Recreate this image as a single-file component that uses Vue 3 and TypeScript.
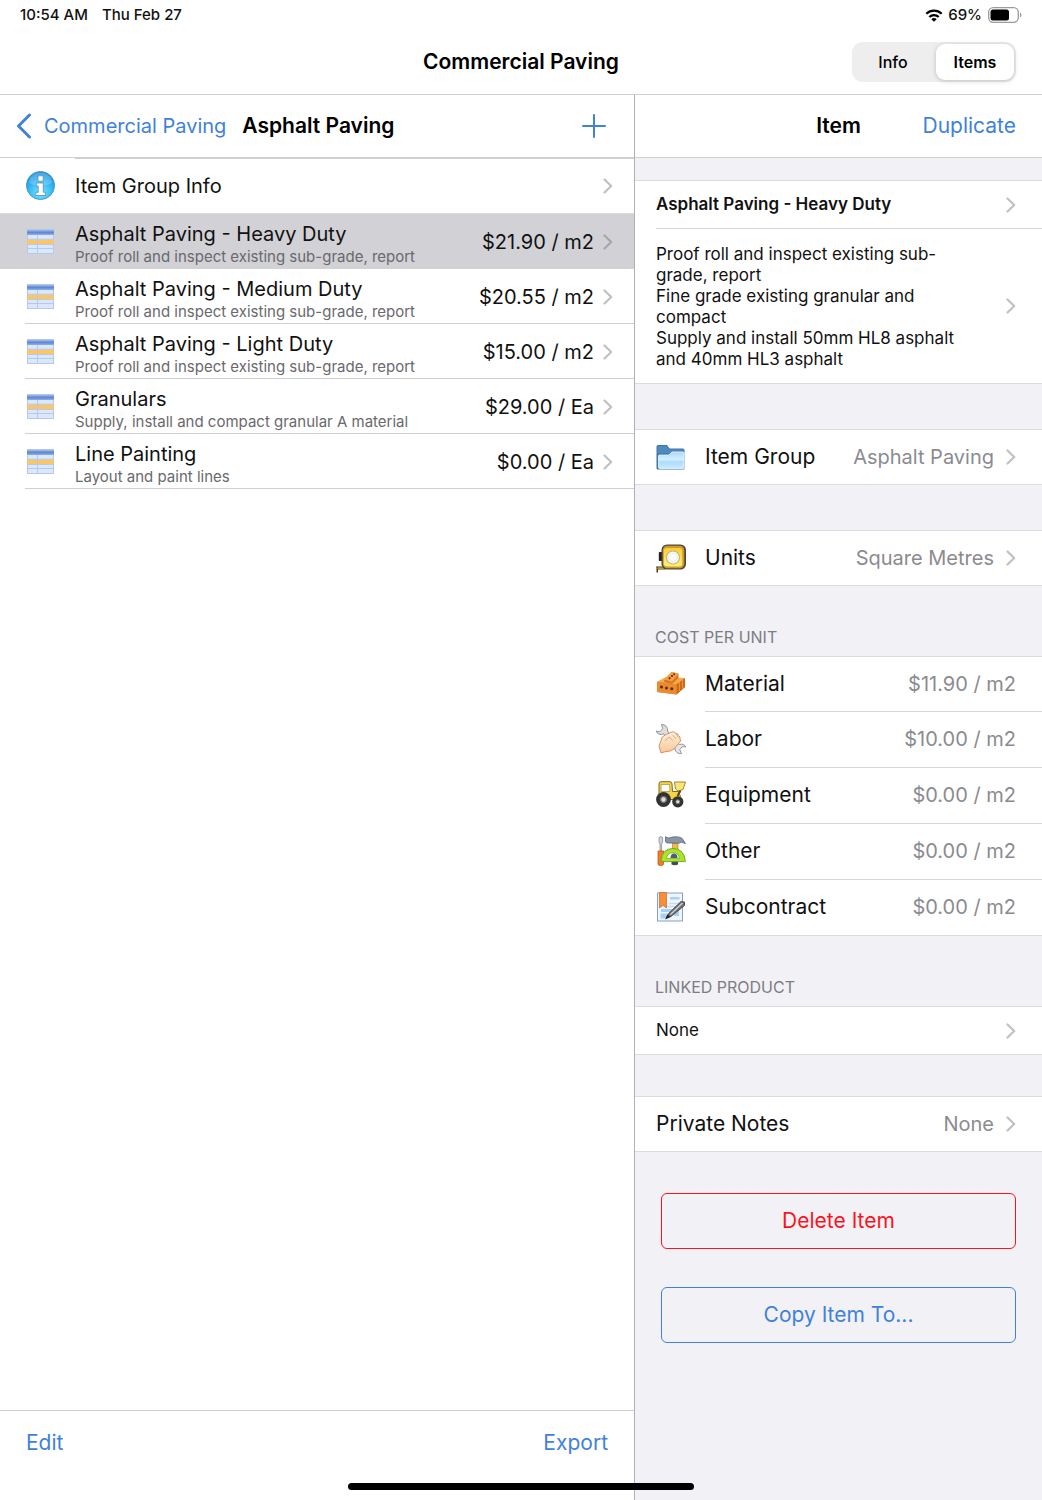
<script setup lang="ts">
import { ref } from 'vue'

interface EstimateItem {
  name: string
  note: string
  price: string
}

interface CostLine {
  icon: string
  label: string
  value: string
}

const tab = ref<'info' | 'items'>('items')
const selected = ref(0)

const items: EstimateItem[] = [
  { name: 'Asphalt Paving - Heavy Duty', note: 'Proof roll and inspect existing sub-grade, report', price: '$21.90 / m2' },
  { name: 'Asphalt Paving - Medium Duty', note: 'Proof roll and inspect existing sub-grade, report', price: '$20.55 / m2' },
  { name: 'Asphalt Paving - Light Duty', note: 'Proof roll and inspect existing sub-grade, report', price: '$15.00 / m2' },
  { name: 'Granulars', note: 'Supply, install and compact granular A material', price: '$29.00 / Ea' },
  { name: 'Line Painting', note: 'Layout and paint lines', price: '$0.00 / Ea' },
]

const description: string[] = [
  'Proof roll and inspect existing sub-grade, report',
  'Fine grade existing granular and compact',
  'Supply and install 50mm HL8 asphalt and 40mm HL3 asphalt',
]

const costs: CostLine[] = [
  { icon: 'brick', label: 'Material', value: '$11.90 / m2' },
  { icon: 'hand', label: 'Labor', value: '$10.00 / m2' },
  { icon: 'loader', label: 'Equipment', value: '$0.00 / m2' },
  { icon: 'tools', label: 'Other', value: '$0.00 / m2' },
  { icon: 'contract', label: 'Subcontract', value: '$0.00 / m2' },
]
</script>

<template>
  <div class="screen">
    <svg class="defs" width="0" height="0" aria-hidden="true">
      <defs>
        <radialGradient id="g-info" cx="0.5" cy="0.75" r="0.7">
          <stop offset="0" stop-color="#7fe6ff" />
          <stop offset="0.6" stop-color="#35b8f3" />
          <stop offset="1" stop-color="#1d8fdc" />
        </radialGradient>
        <linearGradient id="g-head" x1="0" y1="0" x2="0" y2="1">
          <stop offset="0" stop-color="#c3d3f2" />
          <stop offset="0.55" stop-color="#5c86d3" />
          <stop offset="1" stop-color="#8fafe8" />
        </linearGradient>
        <linearGradient id="g-folder" x1="0" y1="0" x2="0" y2="1">
          <stop offset="0" stop-color="#a9d8fa" />
          <stop offset="0.45" stop-color="#d3efff" />
          <stop offset="0.6" stop-color="#aedcfb" />
          <stop offset="1" stop-color="#cdeaff" />
        </linearGradient>
        <linearGradient id="g-tape" x1="0" y1="0" x2="0" y2="1">
          <stop offset="0" stop-color="#f3cf3a" />
          <stop offset="1" stop-color="#fff37a" />
        </linearGradient>
        <linearGradient id="g-hand" x1="0" y1="0" x2="0" y2="1">
          <stop offset="0" stop-color="#fff0da" />
          <stop offset="1" stop-color="#f8c799" />
        </linearGradient>
        <symbol id="i-chevron" viewBox="0 0 10 16">
          <path d="M1.5 1.5 8.2 8 1.5 14.500" fill="none" stroke="currentColor" stroke-width="2.200" stroke-linecap="round" stroke-linejoin="round" />
        </symbol>
        <symbol id="i-info" viewBox="0 0 30 30">
          <circle cx="14.500" cy="14.500" r="14" fill="url(#g-info)" stroke="#3a9bcb" />
          <path d="M3 12a11.500 10.500 0 0 1 23 0q-11.500 6-23 0z" fill="#fff" opacity="0.2" />
          <path d="M12 4.800h5.200v5.400h-5.200zM10.300 12h7v9.300h2.200v3.200h-9.700v-3.200h2.400v-6.300h-1.900z" fill="#fff" stroke="#4a8fb4" stroke-width="0.800" />
        </symbol>
        <symbol id="i-table" viewBox="0 0 30 30">
          <rect x="1.500" y="2.500" width="26" height="24" fill="#dbe8fc" stroke="#b4c8ec" />
          <rect x="1" y="2" width="27" height="6" fill="url(#g-head)" />
          <rect x="1" y="12.500" width="27" height="4.500" fill="#fcc667" />
          <path d="M1 21.500h27M1 12.200h27M1 17.500h27M11.500 8v19" stroke="#b1c6ec" stroke-width="0.900" fill="none" />
        </symbol>
        <symbol id="i-folder" viewBox="0 0 30 30">
          <path d="M0.500 4.500q0-1.500 1.500-1.500h9l2.500 3.500h13.500q1.500 0 1.500 1.500v18q0 1.500-1.500 1.500h-25q-1.500 0-1.500-1.500z" fill="#3f76a8" />
          <path d="M1.500 5q0-1 1-1h8l2.500 3.500h14.500v4h-26z" fill="#5089bd" />
          <path d="M2.500 14q0-1 1-1h9.500l3-3h11q1 0 1 1v14.500q0 1-1 1h-23.500q-1 0-1-1z" fill="url(#g-folder)" stroke="#eef9ff" stroke-width="0.800" />
        </symbol>
        <symbol id="i-tape" viewBox="0 0 30 30">
          <rect x="2.800" y="9" width="4" height="9" rx="1" fill="#222" />
          <path d="M0 23.500h9v3h-7v3H.500v-4.500z" fill="#4c3a10" />
          <path d="M1.500 24.500h9v1.200h-9z" fill="#f6c431" />
          <rect x="5.500" y="1.500" width="24.500" height="25" rx="5.500" fill="#4a4845" />
          <rect x="6.800" y="2.800" width="21.500" height="22.500" rx="4.500" fill="#d9961f" />
          <rect x="7.800" y="5" width="18.500" height="18.500" rx="3" fill="url(#g-tape)" />
          <circle cx="17" cy="14.500" r="6.500" fill="#fff" stroke="#c5b673" stroke-width="1.200" />
          <circle cx="17" cy="14.500" r="4.400" fill="#fbfbfd" stroke="#dcdade" stroke-width="0.700" />
        </symbol>
        <symbol id="i-brick" viewBox="0 0 30 30">
          <path d="M1 13 10 8.500 29 9.500v8.500l-8.500 7.500L1 23z" fill="#e07c20" />
          <path d="M1 13 10 8l19 1-8.500 6.500z" fill="#f6a94e" />
          <path d="M20.500 15.500 29 9v9l-8.500 7.500z" fill="#cf6a14" />
          <path d="M1 13l19.500 2.500v10L1 23z" fill="#eb8b31" />
          <path d="M8 11.500 15.500 3l7 1.500v4.500l-6.500 6-8-2z" fill="#da751b" />
          <path d="M8 10.500 15.500 3l7 1.500-6.500 8z" fill="#f39f43" />
          <path d="M23.500 13v9M26.500 10.500v9" stroke="#f0a04b" stroke-width="0.800" />
          <g fill="#63290a">
            <circle cx="5.500" cy="18" r="1.500" /><circle cx="10.500" cy="19" r="1.500" /><circle cx="15.800" cy="19.800" r="1.500" />
            <circle cx="13.500" cy="9.300" r="1.100" /><circle cx="16" cy="7" r="1.100" /><circle cx="18.200" cy="5.200" r="1" />
          </g>
        </symbol>
        <symbol id="i-hand" viewBox="0 0 30 30">
          <path d="M5.500.5a5.500 5.500 0 0 1 6 6.500l2.500 3.500-3 2.500-3.500-3a5.500 5.500 0 0 1-7.500-3l3.700.8 3-3z" fill="#dedee1" stroke="#8b8b90" stroke-width="0.900" />
          <path d="M25.500 29.500a5.200 5.200 0 0 1-6.500-5l-1.500-3 3-2.500 3 1.500a5.200 5.200 0 0 1 6.300 2.500l-3.500-.3-2.600 2.800z" fill="#e6e6e8" stroke="#8b8b90" stroke-width="0.900" />
          <path d="M5 16.500q0-4 5-6l6-2.500q2.500-.8 3.500 1.200 2.800 0 3 2.600 2.300.7 1.500 3.200 1.500 2-.5 3.500L18 25q-4 3-8 2.500L5 29 3 22z" fill="url(#g-hand)" stroke="#c98c5c" stroke-width="0.900" />
          <path d="M13.500 13l3 3.500M16.500 11l3.500 4M19.500 9.500l3 4M9 17q2-3 4.500-4" stroke="#d19c6f" stroke-width="0.800" fill="none" />
        </symbol>
        <symbol id="i-loader" viewBox="0 0 30 30">
          <path d="M3 4q0-2.300 2-2.300h9q2 0 2 2.300l.5 7.500h6l2 5-4 3H3z" fill="#f5d548" stroke="#80691f" />
          <path d="M5.200 4.500h8.300l.5 7H5z" fill="#fff" stroke="#a68c2f" stroke-width="0.700" />
          <path d="M18.500 2h11L27 9.500l-5 1.500-2.500-2z" fill="#f9e678" stroke="#9a7a20" stroke-width="0.900" />
          <path d="M21.500 16l3-5.500" stroke="#5b4b1c" stroke-width="2" />
          <circle cx="7.500" cy="19.500" r="7.400" fill="#333335" />
          <circle cx="7.500" cy="19.500" r="2.800" fill="#e2e0d4" stroke="#77777a" stroke-width="1.200" />
          <circle cx="21.800" cy="21.800" r="5.600" fill="#333335" />
          <circle cx="21.800" cy="21.800" r="2" fill="#e2e0d4" stroke="#77777a" />
        </symbol>
        <symbol id="i-tools" viewBox="0 0 30 30">
          <path d="M3 1.500 4.800.5l1.800 1v4.500L5.600 8v7H4V8L3 6z" fill="#ccd3dc" stroke="#76808c" stroke-width="0.700" />
          <path d="M2 15h5.500v13q0 1.500-2.700 1.500T2 28z" fill="#f47b28" stroke="#c25818" stroke-width="0.800" />
          <path d="M16.500 7h5.500v8h-5.500z" fill="#f6b748" stroke="#b97718" stroke-width="0.600" />
          <path d="M15.500 22h6.500v6.500q-3 1.500-6.500 0z" fill="#3d4a64" />
          <path d="M9.500.8l3 1.200q9-2.700 13.500.3l3.500 5.200-4-1.200-3 1-11.500-.4-1.500-1z" fill="#8996a8" stroke="#5b6778" stroke-width="0.800" />
          <path d="M5 25q1-12.500 12-12.500T29.300 25v.6H5z" fill="#a9e32c" stroke="#68a516" stroke-width="0.900" />
          <path d="M10.500 22.500q.8-5.800 6.500-5.800t6.500 5.800z" fill="#fff" stroke="#77b31d" stroke-width="0.800" />
          <path d="M14.500 22q0-4.500 3.500-4.500t3.500 4.500z" fill="#4f5d79" />
        </symbol>
        <symbol id="i-contract" viewBox="0 0 30 30">
          <rect x="1.500" y="1" width="25" height="28" fill="#eef5fd" stroke="#88a2c6" />
          <path d="M14 5h9.500v2.500H14zM5 17h11v3H5zM4.500 21.500h8v5h-8zM18 15h5v9h-5z" fill="#aacff4" />
          <path d="M13 11.500h11M4.500 14.500h19" stroke="#c9ddf1" stroke-width="1.400" />
          <path d="M3.500.5h7v15.500L7 13l-3.500 3z" fill="#f68e3a" stroke="#cf6a20" stroke-width="0.700" />
          <path d="M10.500 26l2-4.500L25 9.500l3.500.5v3.500L15 24.500z" fill="#707074" stroke="#3a3a3d" stroke-width="0.800" />
          <path d="M14.500 22.500 26.500 11" stroke="#d2d2d5" stroke-width="1.300" />
          <path d="M9 27.500l2.500-5 2.800 2.500z" fill="#222" />
        </symbol>
      </defs>
    </svg>

    <div class="status">
      <span>10:54 AM</span>
      <span class="date">Thu Feb 27</span>
      <svg class="wifi" viewBox="0 0 18 13" width="18" height="13" aria-hidden="true">
        <path d="M1.300 4.800a11 11 0 0 1 15.400 0" fill="none" stroke="#000" stroke-width="2.200" />
        <path d="M4.300 8a6.800 6.800 0 0 1 9.400 0" fill="none" stroke="#000" stroke-width="2.200" />
        <path d="M9 12.800 6.300 10.200a3.900 3.900 0 0 1 5.400 0z" />
      </svg>
      <span>69%</span>
      <svg class="battery" viewBox="0 0 34 16" width="34" height="16" aria-hidden="true">
        <rect x="0.700" y="0.700" width="29.600" height="14.600" rx="4.500" fill="none" stroke="#9c9c9e" stroke-width="1.300" />
        <rect x="2.500" y="2.500" width="18.500" height="11" rx="2.500" />
        <path d="M32 5.500q1.500 1 1.500 2.500T32 10.500z" fill="#9c9c9e" />
      </svg>
    </div>

    <header class="topbar">
      <h1 class="bar-title">Commercial Paving</h1>
      <div class="segments">
        <button type="button" class="segment" :class="{ on: tab === 'info' }" :aria-pressed="tab === 'info'" @click="tab = 'info'">Info</button>
        <button type="button" class="segment" :class="{ on: tab === 'items' }" :aria-pressed="tab === 'items'" @click="tab = 'items'">Items</button>
      </div>
    </header>

    <main class="panes">
      <section class="master">
        <nav class="navbar">
          <a href="#" class="back">
            <svg viewBox="0 0 16 26" width="16" height="26" aria-hidden="true">
              <path d="M13.500 2 2.500 13l11 11" fill="none" stroke="currentColor" stroke-width="3" stroke-linecap="round" stroke-linejoin="round" />
            </svg>
            <span>Commercial Paving</span>
          </a>
          <h2 class="bar-title">Asphalt Paving</h2>
          <button type="button" class="plain add" aria-label="Add item">
            <svg viewBox="0 0 24 24" width="24" height="24" aria-hidden="true">
              <path d="M12 1v22M1 12h22" stroke="currentColor" stroke-width="2" stroke-linecap="round" />
            </svg>
          </button>
        </nav>
        <ul class="list">
          <li class="info-line">
            <button type="button" class="row item">
              <svg class="icon" aria-hidden="true"><use href="#i-info" /></svg>
              <span class="label">Item Group Info</span>
              <svg class="chevron" aria-hidden="true"><use href="#i-chevron" /></svg>
            </button>
          </li>
          <li v-for="(item, index) in items" :key="item.name" class="line" :class="{ selected: selected === index }">
            <button type="button" class="row item" @click="selected = index">
              <svg class="icon" aria-hidden="true"><use href="#i-table" /></svg>
              <span class="stack">
                <span class="name">{{ item.name }}</span>
                <span class="note">{{ item.note }}</span>
              </span>
              <span class="price">{{ item.price }}</span>
              <svg class="chevron" aria-hidden="true"><use href="#i-chevron" /></svg>
            </button>
          </li>
        </ul>
        <footer class="toolbar">
          <button type="button" class="plain">Edit</button>
          <button type="button" class="plain">Export</button>
        </footer>
      </section>

      <section class="detail">
        <nav class="navbar detail-bar">
          <h2 class="bar-title">Item</h2>
          <button type="button" class="plain duplicate">Duplicate</button>
        </nav>

        <div class="group first">
          <button type="button" class="row short">
            <span class="small strong">Asphalt Paving - Heavy Duty</span>
            <svg class="chevron" aria-hidden="true"><use href="#i-chevron" /></svg>
          </button>
          <button type="button" class="row ruled about">
            <span class="small copy">
              <span v-for="text in description" :key="text" class="para">{{ text }}</span>
            </span>
            <svg class="chevron" aria-hidden="true"><use href="#i-chevron" /></svg>
          </button>
        </div>

        <div class="group">
          <button type="button" class="row">
            <svg class="icon" aria-hidden="true"><use href="#i-folder" /></svg>
            <span class="label">Item Group</span>
            <span class="value">Asphalt Paving</span>
            <svg class="chevron" aria-hidden="true"><use href="#i-chevron" /></svg>
          </button>
        </div>

        <div class="group">
          <button type="button" class="row">
            <svg class="icon" aria-hidden="true"><use href="#i-tape" /></svg>
            <span class="label">Units</span>
            <span class="value">Square Metres</span>
            <svg class="chevron" aria-hidden="true"><use href="#i-chevron" /></svg>
          </button>
        </div>

        <h3 class="caption">COST PER UNIT</h3>
        <div class="group captioned">
          <button v-for="cost in costs" :key="cost.label" type="button" class="row ruled cost">
            <svg class="icon" aria-hidden="true"><use :href="'#i-' + cost.icon" /></svg>
            <span class="label">{{ cost.label }}</span>
            <span class="value">{{ cost.value }}</span>
          </button>
        </div>

        <h3 class="caption">LINKED PRODUCT</h3>
        <div class="group captioned">
          <button type="button" class="row short">
            <span class="small">None</span>
            <svg class="chevron" aria-hidden="true"><use href="#i-chevron" /></svg>
          </button>
        </div>

        <div class="group notes">
          <button type="button" class="row">
            <span class="label">Private Notes</span>
            <span class="value">None</span>
            <svg class="chevron" aria-hidden="true"><use href="#i-chevron" /></svg>
          </button>
        </div>

        <div class="actions">
          <button type="button" class="action danger">Delete Item</button>
          <button type="button" class="action">Copy Item To...</button>
        </div>
      </section>
    </main>
    <div class="home"></div>
  </div>
</template>

<style>
body {
  margin: 0;
}
</style>

<style scoped>
.screen {
  position: relative;
  display: flex;
  flex-direction: column;
  min-height: 100vh;
  background: #fff;
  color: #111;
  font-family: Inter, "Liberation Sans", sans-serif;
  font-size: 20px;
  line-height: 26px;
}
.defs {
  position: absolute;
}
button {
  margin: 0;
  padding: 0;
  border: 0;
  background: none;
  color: inherit;
  font: inherit;
  text-align: left;
  cursor: pointer;
}
h1, h2, h3, ul {
  margin: 0;
  padding: 0;
}

.status {
  display: flex;
  align-items: center;
  height: 30px;
  padding: 0 20px;
  font-size: 15px;
  font-weight: 500;
}
.date {
  margin: 0 auto 0 14px;
}
.wifi {
  margin-right: 5px;
}
.battery {
  margin-left: 6px;
}

.topbar {
  display: grid;
  grid-template-columns: 1fr auto 1fr;
  align-items: center;
  height: 64px;
  padding: 0 26px;
  border-bottom: 1px solid #cfcfd1;
}
.topbar .bar-title {
  grid-column: 2;
}
.bar-title {
  color: #000;
  font-size: 21px;
  font-weight: 600;
  line-height: 26px;
}
.segments {
  display: flex;
  justify-self: end;
  gap: 4px;
  padding: 2px;
  border-radius: 11px;
  background: #eeeeef;
}
.segment {
  width: 78px;
  height: 36px;
  border-radius: 9px;
  color: #000;
  font-size: 16px;
  font-weight: 500;
  text-align: center;
}
.segment.on {
  background: #fff;
  box-shadow: 0 1px 5px rgba(0, 0, 0, 0.2);
  font-weight: 600;
}

.panes {
  display: grid;
  flex: 1;
  grid-template-columns: minmax(0, 635fr) minmax(0, 407fr);
}
.master {
  display: flex;
  flex-direction: column;
  border-right: 1px solid #b0b0b3;
}
.navbar {
  display: flex;
  align-items: center;
  height: 62px;
  border-bottom: 1px solid #d0d0d3;
  background: #fff;
}
.master .navbar {
  padding: 0 28px 0 16px;
}
.back {
  display: flex;
  align-items: center;
  gap: 12px;
  margin-right: 16px;
  color: #4182d8;
  text-decoration: none;
}
.plain {
  color: #4182d8;
  font-size: 21px;
}
.add {
  display: flex;
  margin-left: auto;
}

.list {
  flex: 1;
  list-style: none;
}
.row {
  display: flex;
  box-sizing: border-box;
  align-items: center;
  width: 100%;
  min-height: 54px;
  padding: 0 26px 0 21px;
}
.item {
  min-height: 55px;
  padding: 0 21px 0 26px;
}
.info-line {
  border-bottom: 1px solid #dcdcde;
  background: linear-gradient(#d0d0d3, #d0d0d3) 75px 0 / 100% 1px no-repeat;
}
.line {
  background: linear-gradient(#cfcfd2, #cfcfd2) 25px 100% / 100% 1px no-repeat;
}
.line.selected {
  background: #d1d1d6;
}
.icon {
  flex: none;
  width: 30px;
  height: 30px;
  margin-right: 19px;
}
.chevron {
  flex: none;
  width: 10px;
  height: 16px;
  margin-left: 12px;
  color: #c0c0c3;
}
.item .chevron {
  margin-left: 9px;
}
.selected .chevron {
  color: #a6a6aa;
}
.label {
  flex: 1;
}
.detail .label {
  font-size: 21px;
}
.stack {
  display: flex;
  flex: 1;
  flex-direction: column;
  padding-top: 4px;
}
.note {
  color: #69696c;
  font-size: 15px;
  line-height: 20px;
}
.price {
  white-space: nowrap;
}
.toolbar {
  display: flex;
  justify-content: space-between;
  height: 50px;
  padding: 19px 26px 20px;
  border-top: 1px solid #cfcfd1;
}
.toolbar .plain {
  height: 26px;
}

.detail {
  display: flex;
  flex-direction: column;
  background: #f2f1f6;
}
.detail-bar {
  display: grid;
  grid-template-columns: 1fr auto 1fr;
  padding: 0 26px;
}
.detail-bar .bar-title {
  grid-column: 2;
}
.duplicate {
  justify-self: end;
}
.group {
  margin-top: 45px;
  border: solid #dcdce0;
  border-width: 1px 0;
  background: #fff;
}
.group.first {
  margin-top: 22px;
}
.group.captioned {
  margin-top: 0;
}
.group.notes {
  margin-top: 41px;
}
.short {
  min-height: 47px;
}
.ruled {
  background: linear-gradient(#d6d6d9, #d6d6d9) 21px 0 / 100% 1px no-repeat;
}
.cost {
  min-height: 56px;
  background-position-x: 70px;
}
.cost:first-child {
  min-height: 54px;
  background: none;
}
.about {
  min-height: 155px;
}
.small {
  flex: 1;
  font-size: 17px;
  line-height: 21px;
}
.strong {
  font-weight: 600;
}
.copy {
  max-width: 320px;
  margin-right: auto;
  padding-top: 2px;
}
.about .chevron {
  margin-left: auto;
}
.para {
  display: block;
}
.value {
  color: #8b8b8f;
}
.caption {
  padding: 41px 20px 9px;
  color: #7d7d82;
  font-size: 16px;
  font-weight: 400;
  line-height: 20px;
}
.actions {
  display: flex;
  flex-direction: column;
  gap: 38px;
  padding: 41px 26px 60px;
}
.action {
  height: 56px;
  border: 1px solid #4182d8;
  border-radius: 6px;
  color: #4182d8;
  font-size: 21px;
  text-align: center;
}
.action.danger {
  border-color: #f9141e;
  color: #f9141e;
}
.home {
  position: absolute;
  bottom: 10px;
  left: 50%;
  width: 346px;
  height: 7px;
  border-radius: 4px;
  background: #000;
  transform: translateX(-50%);
}
</style>
